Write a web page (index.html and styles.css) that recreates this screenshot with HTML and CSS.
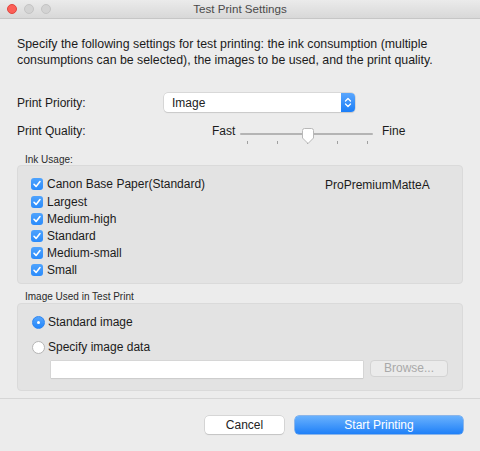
FILE: index.html
```html
<!DOCTYPE html>
<html>
<head>
<meta charset="utf-8">
<link rel="stylesheet" href="styles.css">
</head>
<body>
<div class="window">
  <div class="titlebar">
    <div class="lights">
      <span class="light red"></span>
      <span class="light gray"></span>
      <span class="light gray"></span>
    </div>
    <div class="title">Test Print Settings</div>
  </div>

  <div class="main">
    <p class="desc">Specify the following settings for test printing: the ink consumption (multiple<br>consumptions can be selected), the images to be used, and the print quality.</p>

    <div class="row priority">
      <span class="label">Print Priority:</span>
      <div class="popup">
        <span class="popup-text">Image</span>
        <span class="popup-arrows">
          <svg width="14" height="19" viewBox="0 0 14 19"><path d="M4.5 8 L7 5.5 L9.5 8 M4.5 11 L7 13.5 L9.5 11" fill="none" stroke="#fff" stroke-width="1.3" stroke-linecap="round" stroke-linejoin="round"/></svg>
        </span>
      </div>
    </div>

    <div class="row quality">
      <span class="label">Print Quality:</span>
      <span class="fast">Fast</span>
      <svg class="slider" width="134" height="24" viewBox="0 0 134 24">
        <rect x="0" y="12" width="133" height="2" rx="1" fill="#b4b4b4"/>
        <g stroke="#a0a0a0" stroke-width="1">
          <line x1="7.5" y1="20" x2="7.5" y2="23"/>
          <line x1="37.5" y1="20" x2="37.5" y2="23"/>
          <line x1="67.5" y1="20" x2="67.5" y2="23"/>
          <line x1="97.5" y1="20" x2="97.5" y2="23"/>
          <line x1="127.5" y1="20" x2="127.5" y2="23"/>
        </g>
        <path d="M62.5 9.5 Q62.5 7.5 64.5 7.5 L71.5 7.5 Q73.5 7.5 73.5 9.5 L73.5 17 L68 22.5 L62.5 17 Z" fill="#fff" stroke="#b8b8b8" stroke-width="1"/>
      </svg>
      <span class="fine">Fine</span>
    </div>

    <div class="group-label">Ink Usage:</div>
    <div class="box ink">
      <div class="checks">
        <div class="check first"><span class="cb"><svg width="12" height="12" viewBox="0 0 12 12"><path d="M3 6.3 L5.1 8.4 L9 3.6" fill="none" stroke="#fff" stroke-width="1.6" stroke-linecap="round" stroke-linejoin="round"/></svg></span>Canon Base Paper(Standard)</div>
        <div class="check"><span class="cb"><svg width="12" height="12" viewBox="0 0 12 12"><path d="M3 6.3 L5.1 8.4 L9 3.6" fill="none" stroke="#fff" stroke-width="1.6" stroke-linecap="round" stroke-linejoin="round"/></svg></span>Largest</div>
        <div class="check"><span class="cb"><svg width="12" height="12" viewBox="0 0 12 12"><path d="M3 6.3 L5.1 8.4 L9 3.6" fill="none" stroke="#fff" stroke-width="1.6" stroke-linecap="round" stroke-linejoin="round"/></svg></span>Medium-high</div>
        <div class="check"><span class="cb"><svg width="12" height="12" viewBox="0 0 12 12"><path d="M3 6.3 L5.1 8.4 L9 3.6" fill="none" stroke="#fff" stroke-width="1.6" stroke-linecap="round" stroke-linejoin="round"/></svg></span>Standard</div>
        <div class="check"><span class="cb"><svg width="12" height="12" viewBox="0 0 12 12"><path d="M3 6.3 L5.1 8.4 L9 3.6" fill="none" stroke="#fff" stroke-width="1.6" stroke-linecap="round" stroke-linejoin="round"/></svg></span>Medium-small</div>
        <div class="check"><span class="cb"><svg width="12" height="12" viewBox="0 0 12 12"><path d="M3 6.3 L5.1 8.4 L9 3.6" fill="none" stroke="#fff" stroke-width="1.6" stroke-linecap="round" stroke-linejoin="round"/></svg></span>Small</div>
      </div>
      <div class="media">ProPremiumMatteA</div>
    </div>

    <div class="group-label image-label">Image Used in Test Print</div>
    <div class="box image">
      <div class="radio-row"><span class="radio on"></span>Standard image</div>
      <div class="radio-row second"><span class="radio"></span>Specify image data</div>
      <div class="file-row">
        <div class="field"></div>
        <div class="browse">Browse...</div>
      </div>
    </div>
  </div>

  <div class="footer">
    <div class="btn cancel">Cancel</div>
    <div class="btn primary">Start Printing</div>
  </div>
</div>
</body>
</html>
```

FILE: styles.css
```css
* { box-sizing: border-box; }
html, body { margin: 0; padding: 0; }
body {
  font-family: "Liberation Sans", Arial, sans-serif;
  font-size: 12px;
  color: #1b1b1b;
  background: #ececec;
}
.window {
  width: 480px;
  height: 451px;
  background: #ececec;
  overflow: hidden;
}
.titlebar {
  height: 19px;
  background: linear-gradient(#ebebeb, #d8d8d8);
  border-bottom: 1px solid #c6c6c6;
  display: flex;
  align-items: center;
  position: relative;
}
.lights {
  display: flex;
  gap: 7px;
  padding-left: 7px;
  position: absolute;
  left: 0;
  top: 4px;
}
.light {
  width: 10px;
  height: 10px;
  border-radius: 50%;
}
.light.red { background: #fc5f57; border: 1px solid #e0463e; }
.light.gray { background: #d3d3d3; border: 1px solid #c4c4c4; }
.title {
  flex: 1;
  text-align: center;
  font-size: 11.6px;
  color: #4a4a4a;
  line-height: 18px;
}
.main {
  padding: 0 17px;
}
.desc {
  margin: 17px 0 0 0;
  line-height: 16px;
  font-size: 12.35px;
}
.row {
  display: flex;
  align-items: center;
}
.label { width: 147px; }
.priority {
  margin-top: 25px;
  height: 19px;
}
.popup {
  width: 191px;
  height: 19px;
  background: #fff;
  border-radius: 4px;
  box-shadow: 0 0 0 0.5px #c4c4c4, 0 1px 1px rgba(0,0,0,0.12);
  display: flex;
  align-items: center;
}
.popup-text {
  flex: 1;
  padding-left: 8px;
  color: #222;
}
.popup-arrows {
  width: 14px;
  height: 19px;
  background: linear-gradient(#5aa6fd, #1b7ef8);
  border-radius: 0 4px 4px 0;
  display: flex;
}
.quality {
  margin-top: 9px;
  height: 24px;
  align-items: flex-start;
}
.quality .label, .fast, .fine { line-height: 20px; }
.fast { margin-left: 48px; width: 28px; }
.slider { display: block; }
.fine { margin-left: 8px; }
.group-label {
  margin-top: 9px;
  padding-left: 8px;
  font-size: 10px;
  line-height: 11px;
  color: #2a2a2a;
}
.image-label { margin-top: 7px; line-height: 12px; }
.box {
  background: #e3e3e3;
  border: 1px solid #dadada;
  border-radius: 4px;
}
.ink {
  height: 119px;
  display: flex;
  padding: 9px 0 0 13px;
}
.checks { flex: 1; }
.check {
  display: flex;
  align-items: center;
  height: 17px;
}
.check.first { margin-bottom: 1px; }
.cb {
  width: 12px;
  height: 12px;
  border-radius: 3px;
  background: linear-gradient(#4fa3fd, #2a8bfb);
  margin-right: 4px;
  display: flex;
}
.media {
  width: 137px;
  padding-top: 2px;
  line-height: 17px;
}
.image {
  height: 88px;
  padding: 11px 0 0 14px;
}
.radio-row {
  display: flex;
  align-items: center;
  height: 14px;
}
.radio-row.second { margin-top: 11px; }
.radio {
  width: 13px;
  height: 13px;
  border-radius: 50%;
  background: #fff;
  border: 1px solid #b5b5b5;
  margin-right: 3px;
  position: relative;
}
.radio.on {
  background: linear-gradient(#55a5fd, #2386fa);
  border-color: #2d86f2;
}
.radio.on::after {
  content: "";
  position: absolute;
  left: 4px;
  top: 4px;
  width: 3px;
  height: 3px;
  border-radius: 50%;
  background: #fff;
}
.file-row {
  display: flex;
  align-items: flex-start;
  margin-top: 7px;
  padding-left: 19px;
}
.field {
  width: 312px;
  height: 17px;
  background: #fff;
  box-shadow: 0 0 0 0.5px #c9c9c9, 0 1px 1px rgba(0,0,0,0.08);
}
.browse {
  margin-left: 7px;
  margin-top: -1px;
  width: 78px;
  height: 17px;
  border-radius: 4px;
  background: #ebebeb;
  border: 1px solid #d3d3d3;
  color: #a9a9a9;
  text-align: center;
  line-height: 15px;
}
.footer {
  margin-top: 7px;
  border-top: 1px solid #d6d6d6;
  padding: 17px 17px 0 0;
  display: flex;
  justify-content: flex-end;
  gap: 11px;
}
.btn {
  height: 18px;
  border-radius: 4px;
  text-align: center;
  line-height: 18px;
}
.cancel {
  width: 79px;
  background: #fff;
  box-shadow: 0 0 0 0.5px #c0c0c0, 0 1px 1px rgba(0,0,0,0.15);
  color: #222;
}
.primary {
  width: 168px;
  background: linear-gradient(#69b1fd, #1f80f8);
  color: #fff;
  box-shadow: 0 0 0 0.5px #2a7fe6;
}
```
